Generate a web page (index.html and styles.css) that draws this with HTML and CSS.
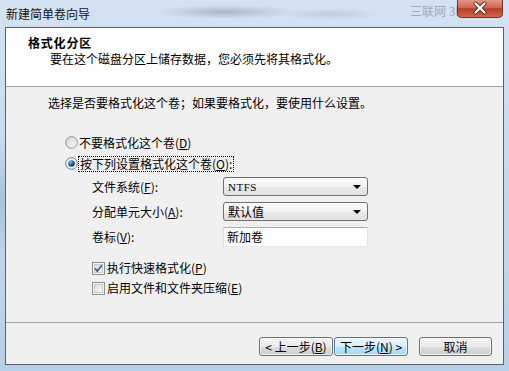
FILE: index.html
```html
<!DOCTYPE html>
<html lang="zh-CN">
<head>
<meta charset="utf-8">
<title>新建简单卷向导</title>
<link rel="stylesheet" href="styles.css">
</head>
<body>
<div class="window">
  <div class="titlebar">
    <span class="title">新建简单卷向导</span>
    <span class="watermark">三联网 3lian.com</span>
    <div class="close">
      <svg width="46" height="18" viewBox="0 0 46 18">
        <defs>
          <linearGradient id="cg" x1="0" y1="0" x2="0" y2="1">
            <stop offset="0" stop-color="#e3978a"/>
            <stop offset="0.45" stop-color="#d0644f"/>
            <stop offset="0.5" stop-color="#bb3b26"/>
            <stop offset="1" stop-color="#d46a4c"/>
          </linearGradient>
        </defs>
        <path d="M0.5 0 V13.5 Q0.5 17.5 4.5 17.5 H41.5 Q45.5 17.5 45.5 13.5 V0" fill="url(#cg)" stroke="#6e2e24"/>
        <path d="M18.5 3.5 L27.5 12.5 M27.5 3.5 L18.5 12.5" stroke="#5a2a22" stroke-width="4" stroke-linecap="round"/>
        <path d="M18.5 3.5 L27.5 12.5 M27.5 3.5 L18.5 12.5" stroke="#ffffff" stroke-width="2.2" stroke-linecap="round"/>
      </svg>
    </div>
  </div>
  <div class="client">
    <div class="header">
      <div class="h-title">格式化分区</div>
      <div class="h-sub">要在这个磁盘分区上储存数据，您必须先将其格式化。</div>
    </div>
    <div class="body">
      <p class="intro">选择是否要格式化这个卷；如果要格式化，要使用什么设置。</p>
      <div class="radio-row">
        <svg class="radio" width="13" height="13" viewBox="0 0 13 13">
          <defs>
            <linearGradient id="rg" x1="0" y1="0" x2="1" y2="1">
              <stop offset="0" stop-color="#d4d4d4"/>
              <stop offset="1" stop-color="#fafafa"/>
            </linearGradient>
          </defs>
          <circle cx="6.5" cy="6.5" r="5.8" fill="url(#rg)" stroke="#8e8f8f" stroke-width="1"/>
        </svg>
        <span>不要格式化这个卷(<u>D</u>)</span>
      </div>
      <div class="radio-row">
        <svg class="radio" width="13" height="13" viewBox="0 0 13 13">
          <defs>
            <radialGradient id="rd" cx="0.35" cy="0.3" r="0.8">
              <stop offset="0" stop-color="#8fc4ee"/>
              <stop offset="0.45" stop-color="#2c6aa8"/>
              <stop offset="1" stop-color="#0d2a4c"/>
            </radialGradient>
          </defs>
          <circle cx="6.5" cy="6.5" r="5.8" fill="#f4f4f4" stroke="#6f7f94" stroke-width="1"/>
          <circle cx="6.5" cy="6.5" r="3.3" fill="url(#rd)"/>
        </svg>
        <span class="focus">按下列设置格式化这个卷(<u>O</u>):</span>
      </div>
      <div class="form">
        <span class="label">文件系统(<u>F</u>):</span>
        <div class="combo"><span class="mono">NTFS</span><span class="arrow"></span></div>
        <span class="label">分配单元大小(<u>A</u>):</span>
        <div class="combo"><span>默认值</span><span class="arrow"></span></div>
        <span class="label">卷标(<u>V</u>):</span>
        <div class="textbox">新加卷</div>
      </div>
      <div class="checks">
        <div class="check-row">
          <svg class="check" width="13" height="13" viewBox="0 0 13 13">
            <defs>
              <linearGradient id="kg" x1="0" y1="0" x2="1" y2="1">
                <stop offset="0" stop-color="#dcdcdc"/>
                <stop offset="1" stop-color="#fbfbfb"/>
              </linearGradient>
            </defs>
            <rect x="0.5" y="0.5" width="12" height="12" fill="#f4f4f4" stroke="#8e8f8f"/>
            <rect x="2.5" y="2.5" width="8" height="8" fill="url(#kg)" stroke="#c9c9c9"/>
            <path d="M3 6.3 L5.3 9 L10 3.2" fill="none" stroke="#4b5f94" stroke-width="1.8"/>
          </svg>
          <span>执行快速格式化(<u>P</u>)</span>
        </div>
        <div class="check-row">
          <svg class="check" width="13" height="13" viewBox="0 0 13 13">
            <rect x="0.5" y="0.5" width="12" height="12" fill="#f4f4f4" stroke="#8e8f8f"/>
            <rect x="2.5" y="2.5" width="8" height="8" fill="url(#kg)" stroke="#c9c9c9"/>
          </svg>
          <span>启用文件和文件夹压缩(<u>E</u>)</span>
        </div>
      </div>
    </div>
    <div class="footer">
      <div class="btn">&lt; 上一步(<u>B</u>)</div>
      <div class="btn default">下一步(<u>N</u>) &gt;</div>
      <div class="btn cancel">取消</div>
    </div>
  </div>
</div>
</body>
</html>
```
FILE: styles.css
```css
html, body {
  margin: 0;
  padding: 0;
}

body {
  width: 509px;
  height: 371px;
  overflow: hidden;
  font-family: "Noto Sans CJK SC", "Liberation Sans", sans-serif;
  font-size: 12px;
  color: #000;
}

.window {
  height: 371px;
  display: flex;
  flex-direction: column;
  background:
    radial-gradient(ellipse 16px 60px at 2px 200px, rgba(120,150,190,0.35), transparent),
    linear-gradient(180deg, #d4e3f3 0%, #c8dbef 40%, #b8cfe8 100%);
}

.titlebar {
  height: 27px;
  flex: none;
  position: relative;
  display: flex;
  align-items: center;
  background:
    radial-gradient(ellipse 70px 7px at 225px 12px, rgba(110,120,140,0.4), transparent),
    radial-gradient(ellipse 50px 6px at 330px 14px, rgba(130,140,160,0.25), transparent);
}

.title {
  padding-left: 6px;
  line-height: 14px;
  color: #111;
}

.watermark {
  position: absolute;
  left: 410px;
  top: 4px;
  line-height: 14px;
  color: #9eabba;
  white-space: nowrap;
}

.close {
  position: absolute;
  left: 457px;
  top: 0;
  width: 46px;
  height: 18px;
}

.close svg {
  display: block;
}

.client {
  flex: 1;
  margin: 0 5px 6px 5px;
  border: 1px solid #5e6166;
  display: flex;
  flex-direction: column;
  background: #f0f0f0;
}

.header {
  flex: none;
  height: 58px;
  background: #fff;
  border-bottom: 1px solid #a0a0a0;
}

.h-title {
  font-weight: bold;
  padding: 8px 0 0 22px;
  line-height: 14px;
  letter-spacing: 0.8px;
}

.h-sub {
  padding: 2px 0 0 44px;
  line-height: 14px;
}

.body {
  flex: 1;
  padding: 9px 0 0 42px;
}

.intro {
  margin: 0 0 22px;
  line-height: 14px;
}

.radio-row {
  display: flex;
  align-items: center;
  height: 21px;
  margin-left: 17px;
  line-height: 14px;
}

.radio {
  display: block;
  margin-right: 1px;
  flex: none;
}

.focus {
  outline: 1px dotted #000;
  outline-offset: 0;
  padding: 0 1px;
}

.form {
  display: grid;
  grid-template-columns: 131px 145px;
  grid-auto-rows: 25px;
  align-items: center;
  margin-left: 44px;
}

.label {
  line-height: 14px;
}

.combo {
  height: 19px;
  box-sizing: border-box;
  border: 1px solid #707070;
  border-radius: 3px;
  background: linear-gradient(180deg, #fbfbfb 0%, #f3f3f3 50%, #e9e9e9 51%, #e2e2e2 100%);
  display: flex;
  align-items: center;
  justify-content: space-between;
  padding: 0 6px 0 4px;
  line-height: 14px;
}

.mono {
  font-family: "Liberation Serif", serif;
  font-size: 11px;
  letter-spacing: 0.5px;
}

.arrow {
  width: 0;
  height: 0;
  border-left: 4px solid transparent;
  border-right: 4px solid transparent;
  border-top: 4px solid #000;
}

.textbox {
  height: 20px;
  box-sizing: border-box;
  border: 1px solid;
  border-color: #abadb3 #e2e3ea #e3e9ef #dbdfe6;
  background: #fff;
  padding-left: 3px;
  line-height: 17px;
}

.checks {
  margin: 9px 0 0 44px;
}

.check-row {
  height: 20px;
  display: flex;
  align-items: center;
  line-height: 14px;
}

.check {
  display: block;
  flex: none;
  margin-right: 2px;
}

.footer {
  flex: none;
  height: 27px;
  padding: 14px 11px 0 0;
  border-top: 1px solid #a0a0a0;
  display: flex;
  justify-content: flex-end;
  align-items: flex-start;
}

.btn {
  width: 74px;
  height: 19px;
  box-sizing: border-box;
  border: 1px solid #707070;
  border-radius: 3px;
  background: linear-gradient(180deg, #f2f2f2 0%, #ebebeb 50%, #dddddd 51%, #cfcfcf 100%);
  box-shadow: inset 0 0 0 1px rgba(255,255,255,0.7);
  display: flex;
  align-items: center;
  justify-content: center;
  line-height: 14px;
  white-space: nowrap;
}

.btn.default {
  margin-left: 1px;
  border-color: #3c7fb1;
  background: linear-gradient(180deg, #eaf6fd 0%, #d9f0fc 50%, #bee6fd 51%, #a7d9f5 100%);
}

.btn.cancel {
  width: 73px;
  margin-left: 11px;
}
```
